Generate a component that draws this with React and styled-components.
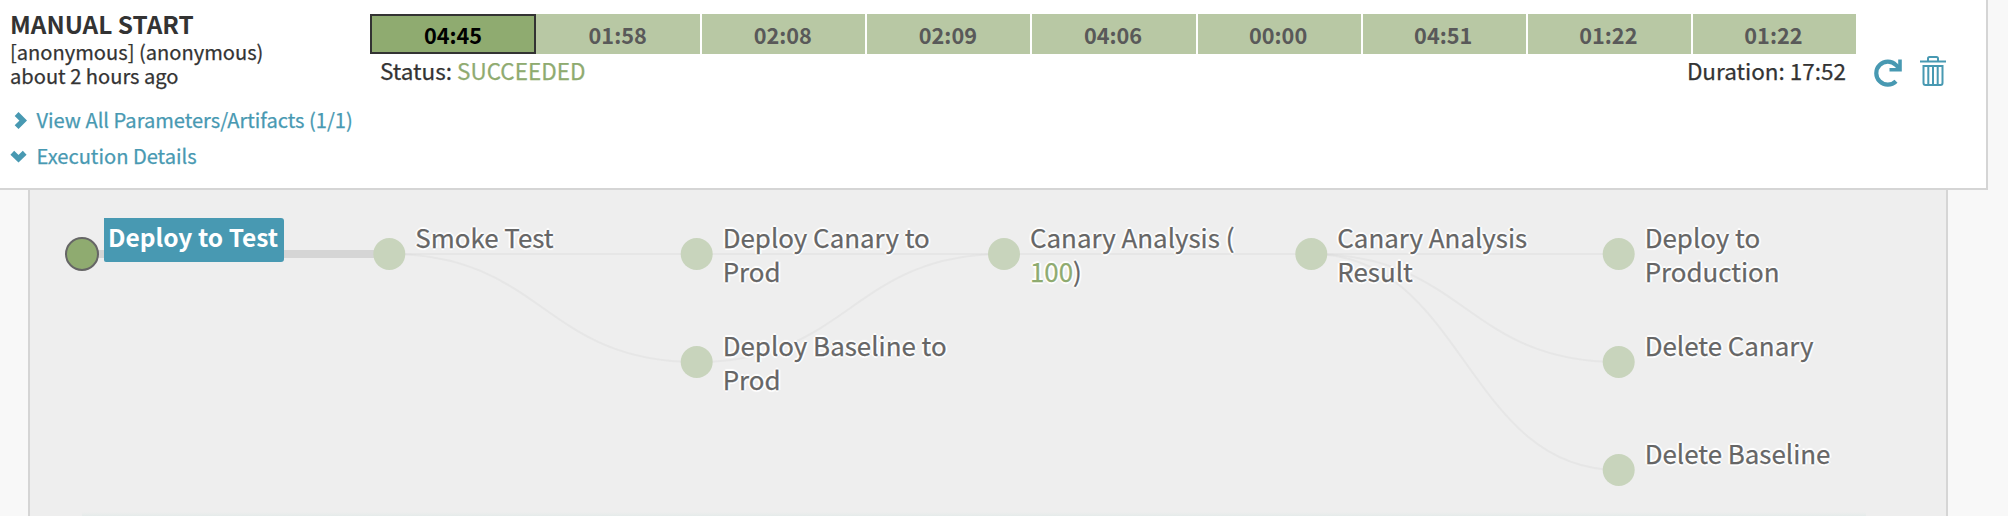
import React from "react";
import styled, { createGlobalStyle } from "styled-components";

const GlobalStyle = createGlobalStyle`
  * { box-sizing: border-box; }
  body {
    margin: 0;
    background: #f8f8f8;
    color: #333;
    font-family: "Noto Sans CJK SC", "Noto Sans", sans-serif;
    -webkit-font-smoothing: antialiased;
    -webkit-text-stroke: 0.25px currentColor;
  }
`;

const Page = styled.div`
  height: 516px;
  overflow: hidden;
  display: flex;
  flex-direction: column;
`;

const Execution = styled.section`
  display: flex;
  width: 1988px;
  height: 190px;
  flex: none;
  padding-left: 10px;
  background: #fff;
  border-right: 2px solid #d5d5d5;
  border-bottom: 2px solid #d5d5d5;
`;

const Summary = styled.div`
  width: 360px;
  flex: none;
  padding-top: 9px;
  white-space: nowrap;
`;

const Title = styled.h4`
  margin: 0 0 1px;
  font-size: 24.4px;
  line-height: 30px;
  font-weight: 700;
  -webkit-text-stroke: 0;
`;

const Line = styled.div`
  font-size: 20.1px;
  line-height: 24px;
`;

const Links = styled.div`
  margin-top: 14px;
`;

const LinkRow = styled.a`
  display: flex;
  align-items: center;
  gap: 9.5px;
  font-size: 20.1px;
  line-height: 36px;
  color: #4899b2;
  svg { flex: none; }
`;

const Progress = styled.div`
  width: 1486px;
  flex: none;
  padding-top: 14px;
`;

const Bar = styled.div`
  display: grid;
  grid-template-columns: repeat(9, 1fr);
  grid-template-rows: 40px;
  height: 40px;
`;

const Stage = styled.div`
  padding: 1px 2px 0 0;
  border-left: 2px solid #fff;
  background: #b8c8a4;
  color: #595959;
  font-size: 21.7px;
  line-height: 40px;
  font-weight: 700;
  -webkit-text-stroke: 0;
  text-align: center;
  ${(p) => p.$after && `border-left-color: #b8c8a4;`}
  ${(p) =>
    p.$active &&
    `padding-right: 0; border: 2px solid #333; margin-right: -1px; z-index: 1; background: #8fab70; color: #000; line-height: 36px;`}
`;

const StatusRow = styled.div`
  display: flex;
  justify-content: space-between;
  padding: 4px 10px 0;
  font-size: 22.5px;
  line-height: 24px;
`;

const Success = styled.span`
  color: #8fab70;
`;

const Actions = styled.div`
  display: flex;
  align-items: flex-start;
  gap: 18px;
  padding: 56px 0 0 18px;
  color: #4899b2;
`;

const Details = styled.section`
  width: 1920px;
  height: 326px;
  flex: none;
  margin-left: 28px;
  background: #eee;
  border: solid #d5d5d5;
  border-width: 0 2px;
  display: flex;
  flex-direction: column;
  justify-content: space-between;
`;

const Graph = styled.div`
  position: relative;
  height: 320px;
`;

const Edges = styled.svg`
  position: absolute;
  inset: 0;
  width: 1916px;
  height: 320px;
`;

const NodeLabel = styled.div`
  position: absolute;
  width: 236px;
  font-size: 25.9px;
  line-height: 34px;
  color: #666;
  text-shadow: 0 2px 1px #fff, 2px 0 1px #fff, -2px 0 1px #fff, 0 -2px 1px #fff;
  ${(p) =>
    p.$active &&
    `width: 180px; height: 44px; padding: 2px 4px; margin: -2px 0 0 -4px; font-size: 24.5px; font-weight: 700;
     -webkit-text-stroke: 0; color: #fff; background: #4899b2; text-shadow: none; white-space: nowrap;
     border-radius: 0 3px 3px 2px;`}
`;

const BottomShade = styled.div`
  height: 4px;
  margin: 0 80px 0 52px;
  background: linear-gradient(#eee, #e5ebea);
`;

const stages = ["04:45", "01:58", "02:08", "02:09", "04:06", "00:00", "04:51", "01:22", "01:22"];

const X = [52, 359.3, 666.7, 974, 1281.3, 1588.7];
const Y = [64, 172, 280];

const nodes = [
  { c: 0, r: 0, label: "Deploy to Test", active: true },
  { c: 1, r: 0, label: "Smoke Test" },
  { c: 2, r: 0, label: <>Deploy Canary to<br />Prod</> },
  { c: 2, r: 1, label: <>Deploy Baseline to<br />Prod</> },
  { c: 3, r: 0, label: <>Canary Analysis (<br /><Success>100</Success>)</> },
  { c: 4, r: 0, label: <>Canary Analysis<br />Result</> },
  { c: 5, r: 0, label: <>Deploy to<br />Production</> },
  { c: 5, r: 1, label: "Delete Canary" },
  { c: 5, r: 2, label: "Delete Baseline" },
];

const edges = [
  [1, 0, 2, 0], [1, 0, 2, 1], [2, 0, 3, 0], [2, 1, 3, 0], [3, 0, 4, 0],
  [4, 0, 5, 0], [4, 0, 5, 1], [4, 0, 5, 2],
];

const edgePath = ([a, b, c, d]) => {
  const mid = (X[a] + X[c]) / 2;
  return `M${X[a]} ${Y[b]}C${mid} ${Y[b]} ${mid} ${Y[d]} ${X[c]} ${Y[d]}`;
};

const Chevron = ({ down }) => (
  <svg width="17" height="24" viewBox="0 0 17 24" fill="none" stroke="currentColor" strokeWidth="5.4">
    {down ? <path d="M2.300 8.800l6.200 6 6.200-6" /> : <path d="M6.600 6l6.600 6.600-6.600 6.600" />}
  </svg>
);

const Redo = () => (
  <svg width="28" height="32" viewBox="0 0 28 32" fill="none" stroke="currentColor">
    <path d="M22 25.2A11.5 11.5 0 1 1 22 9.1L25 12" strokeWidth="4.2" />
    <path d="M26 3.500V13.700H15.500" strokeWidth="3.6" />
  </svg>
);

const Trash = () => (
  <svg width="26" height="32" viewBox="0 0 26 32" fill="none" stroke="currentColor" strokeWidth="2">
    <path d="M0 5.5H26M8 5V2.5Q8 1 9.500 1H16.500Q18 1 18 2.500V5" />
    <path d="M3.500 10H22.500V27Q22.500 29 20.500 29H5.500Q3.500 29 3.500 27ZM8.300 10V29M13 10V29M17.700 10V29" />
  </svg>
);

export default function App() {
  return (
    <Page>
      <GlobalStyle />
      <Execution>
        <Summary>
          <Title>MANUAL START</Title>
          <Line>[anonymous] (anonymous)</Line>
          <Line>about 2 hours ago</Line>
          <Links>
            <LinkRow><Chevron />View All Parameters/Artifacts (1/1)</LinkRow>
            <LinkRow><Chevron down />Execution Details</LinkRow>
          </Links>
        </Summary>
        <Progress>
          <Bar>
            {stages.map((t, i) => (
              <Stage key={i} $active={i === 0} $after={i === 1}>{t}</Stage>
            ))}
          </Bar>
          <StatusRow>
            <span>Status: <Success>SUCCEEDED</Success></span>
            <span>Duration: 17:52</span>
          </StatusRow>
        </Progress>
        <Actions><Redo /><Trash /></Actions>
      </Execution>
      <Details>
        <Graph>
          <Edges>
            <path d={`M${X[0]} ${Y[0]}H${X[1]}`} stroke="#d5d5d5" strokeWidth="8" />
            {edges.map((e, i) => (
              <path key={i} d={edgePath(e)} fill="none" stroke="#d5d5d5" strokeOpacity="0.3" strokeWidth="2" />
            ))}
            {nodes.map((n, i) => (
              <circle
                key={i}
                cx={X[n.c]}
                cy={Y[n.r]}
                r="16"
                fill={n.active ? "#8fab70" : "#c8d4bc"}
                stroke={n.active ? "#666" : "none"}
                strokeWidth="2"
              />
            ))}
          </Edges>
          {nodes.map((n, i) => (
            <NodeLabel key={i} $active={n.active} style={{ left: X[n.c] + 26, top: Y[n.r] - 34 }}>
              {n.label}
            </NodeLabel>
          ))}
        </Graph>
        <BottomShade />
      </Details>
    </Page>
  );
}
